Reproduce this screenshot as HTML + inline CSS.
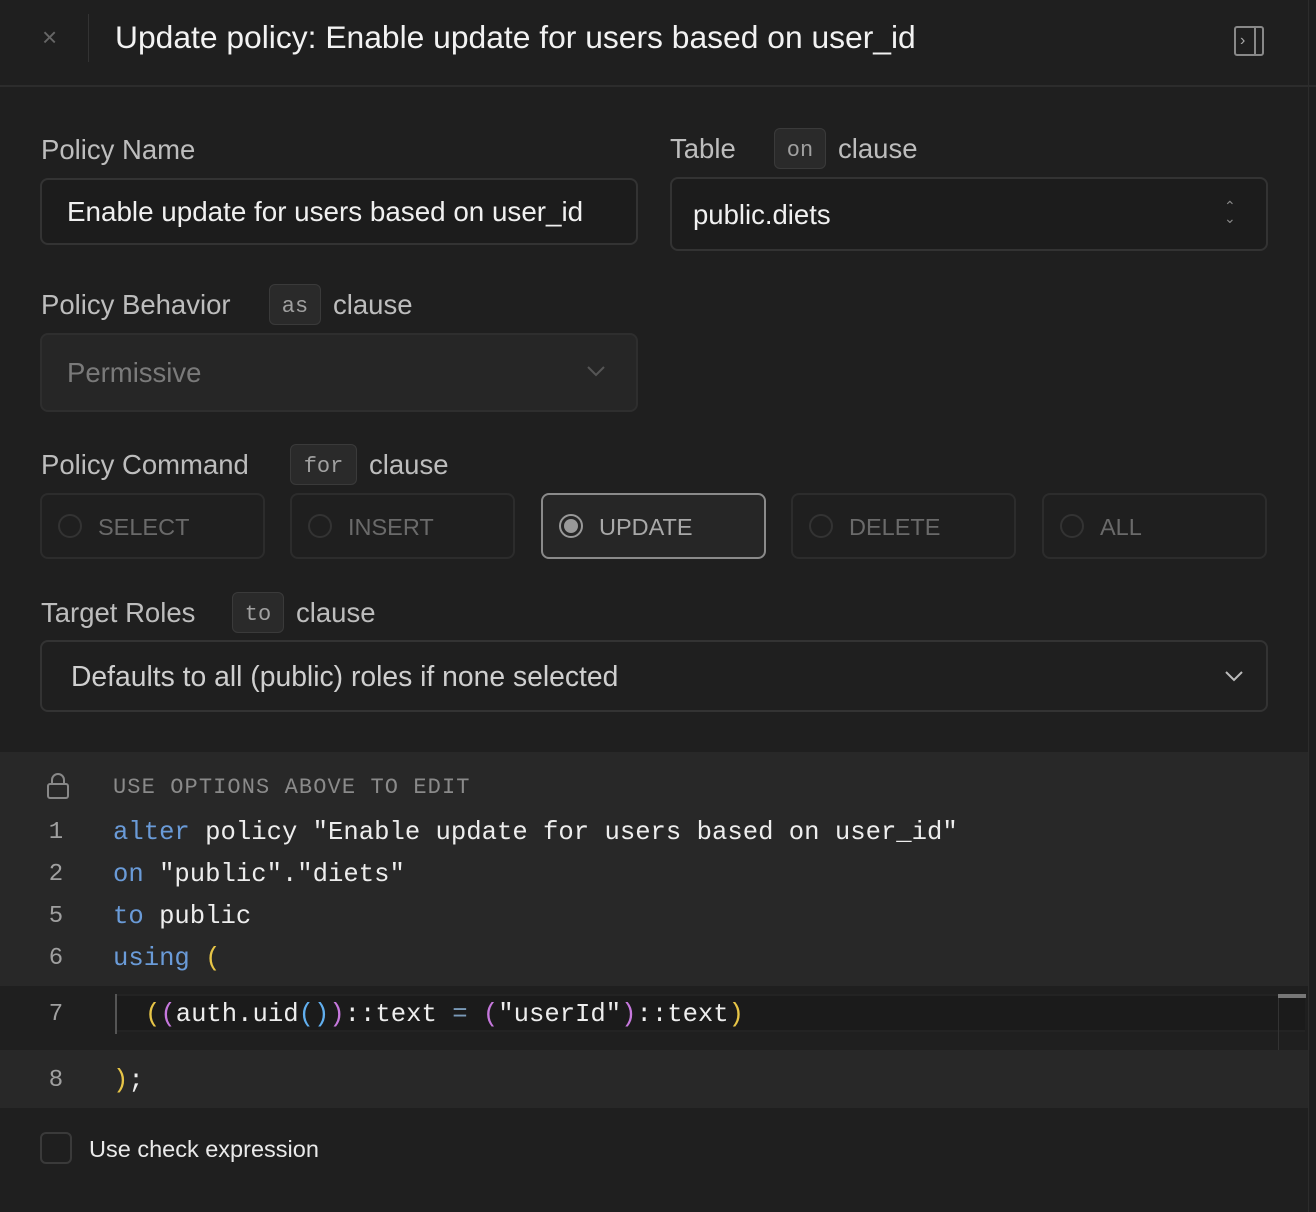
<!DOCTYPE html>
<html><head><style>
*{box-sizing:border-box;margin:0;padding:0}
body{width:1316px;height:1212px;background:#1f1f1f;font-family:"Liberation Sans",sans-serif;color:#ededed;position:relative;overflow:hidden}
.a{position:absolute;white-space:nowrap}
.lbl{font-size:27.5px;color:#bdbdbd}
.tag{position:absolute;border:1px solid #3a3a3a;background:#2a2a2a;border-radius:6px;font-family:"Liberation Mono",monospace;font-size:22px;color:#a0a0a0;text-align:center;height:41px;line-height:44px}
.box{position:absolute;border:2px solid #333;border-radius:8px;background:#1c1c1c}
.rad{position:absolute;top:493px;width:225px;height:66px;border:2px solid #2c2c2c;border-radius:8px;background:#1f1f1f;font-size:23.5px;color:#6a6a6a;line-height:64px;padding-left:56px}
.rad i{position:absolute;left:16px;top:19px;width:24px;height:24px;border:2px solid #333;border-radius:50%}
.code{font-family:"Liberation Mono",monospace;font-size:25.6px;}
.ln{position:absolute;left:40px;width:32px;text-align:center;color:#a0a0a0;font-family:"Liberation Mono",monospace;font-size:24px}
.kw{color:#6a9bd8}.y{color:#e7c547}.p{color:#c678dd}.b{color:#61afef}
</style></head><body>
<div class="a" style="left:0;top:0;width:1316px;height:87px;border-bottom:2px solid #2c2c2c"></div>
<div class="a" style="left:42px;top:22px;font-size:26px;color:#666">×</div>
<div class="a" style="left:88px;top:14px;width:1px;height:48px;background:#333"></div>
<div class="a" style="left:115px;top:19px;font-size:31.8px;color:#f2f2f2">Update policy: Enable update for users based on user_id</div>
<div class="a" style="left:1234px;top:26px;width:30px;height:30px;border:2px solid #888;border-radius:3px"><div style="position:absolute;right:6px;top:0;width:2px;height:26px;background:#888"></div><div style="position:absolute;left:4px;top:4px;font-size:16px;color:#aaa">›</div></div>
<div class="a" style="left:1308px;top:0;width:1px;height:1212px;background:#2c2c2c"></div>

<div class="a lbl" style="left:41px;top:134px">Policy Name</div>
<div class="box" style="left:40px;top:178px;width:598px;height:67px"></div>
<div class="a" style="left:67px;top:196px;font-size:27.8px;color:#f0f0f0">Enable update for users based on user_id</div>

<div class="a lbl" style="left:670px;top:133px">Table</div>
<div class="tag" style="left:774px;top:128px;width:52px">on</div>
<div class="a lbl" style="left:838px;top:133px">clause</div>
<div class="box" style="left:670px;top:177px;width:598px;height:74px"></div>
<div class="a" style="left:693px;top:199px;font-size:27.5px;color:#f0f0f0">public.diets</div>
<div class="a" style="left:1224px;top:200px;font-size:14px;color:#888;line-height:12px">⌃<br>⌄</div>

<div class="a lbl" style="left:41px;top:289px">Policy Behavior</div>
<div class="tag" style="left:269px;top:284px;width:52px">as</div>
<div class="a lbl" style="left:333px;top:289px">clause</div>
<div class="box" style="left:40px;top:333px;width:598px;height:79px;background:#262626;border-color:#2e2e2e"></div>
<div class="a" style="left:67px;top:357px;font-size:27.5px;color:#7a7a7a">Permissive</div>
<svg class="a" style="left:586px;top:364px" width="20" height="14"><path d="M2 3l8 8 8-8" stroke="#555" stroke-width="2" fill="none"/></svg>

<div class="a lbl" style="left:41px;top:449px">Policy Command</div>
<div class="tag" style="left:290px;top:444px;width:67px">for</div>
<div class="a lbl" style="left:369px;top:449px">clause</div>
<div class="rad" style="left:40px"><i></i>SELECT</div>
<div class="rad" style="left:290px"><i></i>INSERT</div>
<div class="rad" style="left:541px;border-color:#8a8a8a;background:#262626;color:#a8a8a8"><i style="border-color:#999"><b style="position:absolute;left:3px;top:3px;width:14px;height:14px;border-radius:50%;background:#999"></b></i>UPDATE</div>
<div class="rad" style="left:791px"><i></i>DELETE</div>
<div class="rad" style="left:1042px"><i></i>ALL</div>

<div class="a lbl" style="left:41px;top:597px">Target Roles</div>
<div class="tag" style="left:232px;top:592px;width:52px">to</div>
<div class="a lbl" style="left:296px;top:597px">clause</div>
<div class="box" style="left:40px;top:640px;width:1228px;height:72px;background:#1f1f1f"></div>
<div class="a" style="left:71px;top:660px;font-size:28.3px;color:#cfcfcf">Defaults to all (public) roles if none selected</div>
<svg class="a" style="left:1224px;top:669px" width="20" height="14"><path d="M2 3l8 8 8-8" stroke="#bbb" stroke-width="2" fill="none"/></svg>

<div class="a" style="left:0;top:752px;width:1308px;height:356px;background:#282828"></div>
<div class="a" style="left:0;top:986px;width:1308px;height:64px;background:#1f1f1f"></div>
<div class="a" style="left:115px;top:994px;width:1190px;height:38px;background:#1b1b1b;border-top:2px solid #232323;border-bottom:2px solid #232323"></div>
<div class="a" style="left:115px;top:994px;width:2px;height:40px;background:#555"></div>
<div class="a" style="left:1278px;top:994px;width:28px;height:4px;background:#777"></div>
<div class="a" style="left:1278px;top:998px;width:1px;height:52px;background:#333"></div>
<svg class="a" style="left:46px;top:772px" width="24" height="28"><path d="M6 12V8a6 6 0 0 1 12 0v4" stroke="#888" stroke-width="2" fill="none"/><rect x="2" y="12" width="20" height="14" rx="2" stroke="#888" stroke-width="2" fill="none"/></svg>
<div class="a code" style="left:113px;top:775px;font-size:22px;color:#8a8a8a;letter-spacing:1.1px">USE OPTIONS ABOVE TO EDIT</div>
<div class="ln" style="top:819px">1</div><div class="a code" style="left:113px;top:818px"><span class="kw">alter</span> policy "Enable update for users based on user_id"</div>
<div class="ln" style="top:861px">2</div><div class="a code" style="left:113px;top:860px"><span class="kw">on</span> "public"."diets"</div>
<div class="ln" style="top:903px">5</div><div class="a code" style="left:113px;top:902px"><span class="kw">to</span> public</div>
<div class="ln" style="top:945px">6</div><div class="a code" style="left:113px;top:944px"><span class="kw">using</span> <span class="y">(</span></div>
<div class="ln" style="top:1001px">7</div><div class="a code" style="left:145px;top:1000px"><span class="y">(</span><span class="p">(</span>auth.uid<span class="b">()</span><span class="p">)</span>::text <span style="color:#7a9ab8">=</span> <span class="p">(</span>"userId"<span class="p">)</span>::text<span class="y">)</span></div>
<div class="ln" style="top:1067px">8</div><div class="a code" style="left:113px;top:1066px"><span class="y">)</span>;</div>

<div class="a" style="left:40px;top:1132px;width:32px;height:32px;border:2px solid #3a3a3a;border-radius:6px"></div>
<div class="a" style="left:89px;top:1136px;font-size:23.5px;color:#eaeaea">Use check expression</div>
</body></html>
